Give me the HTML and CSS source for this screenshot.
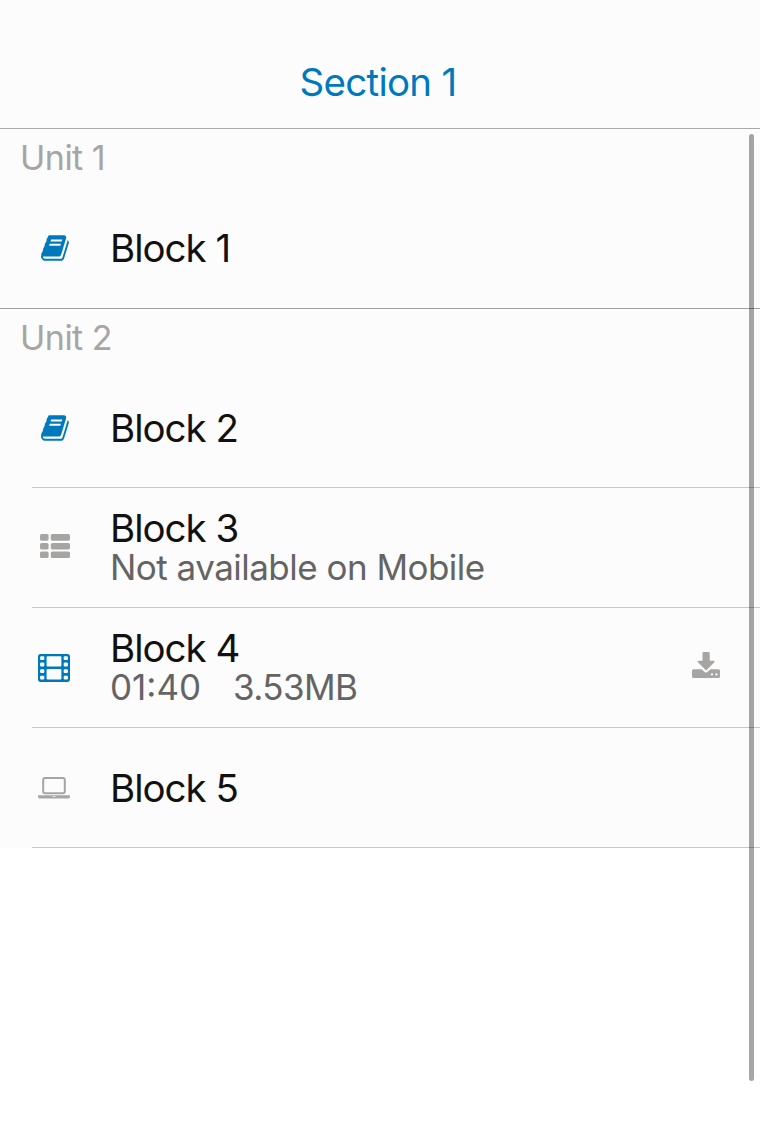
FILE: index.html
```html
<!DOCTYPE html>
<html lang="en">
<head>
<meta charset="utf-8">
<title>Section 1</title>
<link rel="stylesheet" href="styles.css">
</head>
<body>
<svg class="defs" width="0" height="0">
  <symbol id="book" viewBox="0 0 1792 1792"><path d="M1639 478q40 57 18 129l-275 906q-19 64-76.500 107.500t-122.500 43.500h-923q-77 0-148.500-53.500t-99.500-131.500q-24-67-2-127 0-4 3-27t4-37q1-8-3-21.500t-3-19.500q2-11 8-21t16.500-23.500 16.500-23.500q23-38 45-91.500t30-91.500q3-10 .5-30t-.5-28q3-11 17-28t17-23q21-36 42-92t25-90q1-9-2.500-32t.5-28q4-13 22-30.500t22-22.500q19-26 42.500-84.500t27.500-96.500q1-8-3-25.500t-2-26.500q2-8 9-18t18-23 17-21q8-12 16.500-30.500t15-35 16-36 19.500-32 26.500-23.500 36-11.500 47.500 5.500l-1 3q38-9 51-9h761q74 0 114 56t18 130l-274 906q-36 119-71.500 153.500t-128.500 34.500h-869q-27 0-38 15-11 16-1 43 24 70 144 70h923q29 0 56-15.500t35-41.500l300-987q7-22 5-57 38 15 59 43zm-1064 2q-4 13 2 22.500t20 9.500h608q13 0 25.500-9.500t16.500-22.500l21-64q4-13-2-22.500t-20-9.500h-608q-13 0-25.500 9.500t-16.500 22.500zm-83 256q-4 13 2 22.500t20 9.500h608q13 0 25.500-9.500t16.500-22.500l21-64q4-13-2-22.500t-20-9.500h-608q-13 0-25.500 9.500t-16.500 22.500z"/></symbol>
</svg>
<header class="nav"><h1 class="nav-title">Section 1</h1></header>
<main class="outline">
  <section class="unit">
    <h2 class="unit-title">Unit 1</h2>
    <div class="row">
      <div class="icon icon-book"><svg class="blue" width="30" height="30"><use href="#book"/></svg></div>
      <div class="text"><div class="name">Block 1</div></div>
    </div>
  </section>
  <section class="unit">
    <h2 class="unit-title">Unit 2</h2>
    <div class="row">
      <div class="icon icon-book"><svg class="blue" width="30" height="30"><use href="#book"/></svg></div>
      <div class="text"><div class="name">Block 2</div></div>
    </div>
    <div class="row">
      <div class="icon icon-list"><svg class="gray" width="30" height="24" viewBox="0 0 30 24">
        <rect width="8.600" height="6.700" rx="1.600"/><rect x="10.800" width="19.200" height="6.700" rx="1.600"/>
        <rect y="8.900" width="8.600" height="6.500" rx="1.600"/><rect x="10.800" y="8.900" width="19.200" height="6.500" rx="1.600"/>
        <rect y="17.500" width="8.600" height="6.500" rx="1.600"/><rect x="10.800" y="17.500" width="19.200" height="6.500" rx="1.600"/>
      </svg></div>
      <div class="text"><div class="name">Block 3</div><div class="detail">Not available on Mobile</div></div>
    </div>
    <div class="row">
      <div class="icon icon-film"><svg class="blue" width="32" height="28" viewBox="0 0 32 28">
        <path fill-rule="evenodd" d="M2.700 0H29.300A2.700 2.700 0 0 1 32 2.700V25.300A2.700 2.700 0 0 1 29.300 28H2.700A2.700 2.700 0 0 1 0 25.300V2.700A2.700 2.700 0 0 1 2.700 0Z
        M3.100 2.200h2.200q1 0 1 1v1.900q0 1-1 1H3.100q-1 0-1-1V3.200q0-1 1-1Z
        M3.100 8.600h2.200q1 0 1 1v1.900q0 1-1 1H3.100q-1 0-1-1V9.600q0-1 1-1Z
        M3.100 15.200h2.200q1 0 1 1v1.900q0 1-1 1H3.100q-1 0-1-1v-1.900q0-1 1-1Z
        M3.100 21.700h2.200q1 0 1 1v1.900q0 1-1 1H3.100q-1 0-1-1v-1.900q0-1 1-1Z
        M26.700 2.200h2.200q1 0 1 1v1.900q0 1-1 1h-2.200q-1 0-1-1V3.200q0-1 1-1Z
        M26.700 8.600h2.200q1 0 1 1v1.900q0 1-1 1h-2.200q-1 0-1-1V9.600q0-1 1-1Z
        M26.700 15.200h2.200q1 0 1 1v1.900q0 1-1 1h-2.200q-1 0-1-1v-1.900q0-1 1-1Z
        M26.700 21.700h2.200q1 0 1 1v1.900q0 1-1 1h-2.200q-1 0-1-1v-1.900q0-1 1-1Z
        M9.600 2.200h12.800q1 0 1 1v8.400q0 1-1 1H9.600q-1 0-1-1V3.200q0-1 1-1Z
        M9.600 15.100h12.800q1 0 1 1v8.500q0 1-1 1H9.600q-1 0-1-1v-8.500q0-1 1-1Z"/>
      </svg></div>
      <div class="text"><div class="name">Block 4</div><div class="detail meta"><span class="duration">01:40</span><span class="size">3.53MB</span></div></div>
      <svg class="gray download" width="28" height="26" viewBox="0 0 28 26">
        <path d="M11.700 0h5q1 0 1 1v7.800h4q1.600 0 .6 1.500l-7.400 7.500q-.7.700-1.400 0L5.900 10.300q-1-1.500.6-1.500h4V1q0-1 1.200-1Z"/>
        <path fill-rule="evenodd" d="M1.600 17.200h8.100l2.300 2.300q2 1.900 4 0l2.400-2.300h8q1.600 0 1.600 1.600v5.600q0 1.600-1.600 1.600H1.600Q0 26 0 24.400v-5.600q0-1.600 1.600-1.600ZM20 21.300a1.100 1.100 0 1 0 0 2.200 1.100 1.100 0 1 0 0-2.200Zm4.400 0a1.100 1.100 0 1 0 0 2.200 1.100 1.100 0 1 0 0-2.200Z"/>
      </svg>
    </div>
    <div class="row">
      <div class="icon icon-laptop"><svg class="gray" width="32" height="22" viewBox="0 0 32 22">
        <rect class="screen" x="5.200" y="1" width="21.600" height="15.200" rx="1.900"/>
        <path fill-rule="evenodd" d="M0 18.200h32v1.700q0 1.600-2.700 1.600H2.700Q0 21.500 0 19.900ZM14.600 19.200v.7h2.800v-.7Z"/>
      </svg></div>
      <div class="text"><div class="name">Block 5</div></div>
    </div>
  </section>
</main>
<div class="scrollbar"></div>
</body>
</html>
```
FILE: styles.css
```css
* { box-sizing: border-box; }
body { margin: 0; width: 760px; height: 1136px; overflow: hidden; background: #fff; font-family: Inter, "Liberation Sans", sans-serif; }
h1, h2 { margin: 0; font-weight: 400; }
.defs { display: block; }
.nav { height: 129px; padding: 59px 4px 0 0; background: #fcfcfc; border-bottom: 1px solid #a8a8aa; }
.nav-title { color: #0079bc; font-size: 38.500px; line-height: 46px; text-align: center; letter-spacing: -0.730px; }
.unit { background: #fcfcfc; }
.unit + .unit { border-top: 1px solid #a0a0a0; }
.unit-title { height: 59px; padding-left: 20px; line-height: 58px; font-size: 34px; letter-spacing: -0.500px; color: #a6a5a4; }
.row { position: relative; display: flex; align-items: center; height: 120px; padding-right: 40px; color: #111; }
.row::after { content: ""; position: absolute; left: 32px; right: 0; bottom: 0; height: 1px; background: #c8c7cc; }
.unit:first-child .row::after { display: none; }
.icon { width: 110px; padding-left: 40px; }
.icon svg, .download { display: block; }
.icon-book { padding: 0 0 1px 41px; }
.icon-list { padding-bottom: 4px; }
.icon-film { padding-left: 38px; }
.icon-laptop { padding: 0 0 1px 38px; }
.text { flex: 1; }
.name { font-size: 38.500px; line-height: 40px; letter-spacing: -1px; }
.detail { height: 40px; font-size: 35px; line-height: 38px; letter-spacing: -0.520px; color: #646464; }
.meta { display: flex; gap: 32px; }
.duration { letter-spacing: 0; }
.size { letter-spacing: -0.600px; }
.blue { fill: #0079bc; color: #0079bc; }
.gray { fill: #a6a5a4; color: #a6a5a4; }
.screen { fill: none; stroke: currentColor; stroke-width: 2; }
.download { margin-bottom: 6px; }
.scrollbar { position: absolute; left: 749px; top: 134px; width: 5px; height: 947px; border-radius: 2.500px; background: rgba(0, 0, 0, 0.350); }
```
